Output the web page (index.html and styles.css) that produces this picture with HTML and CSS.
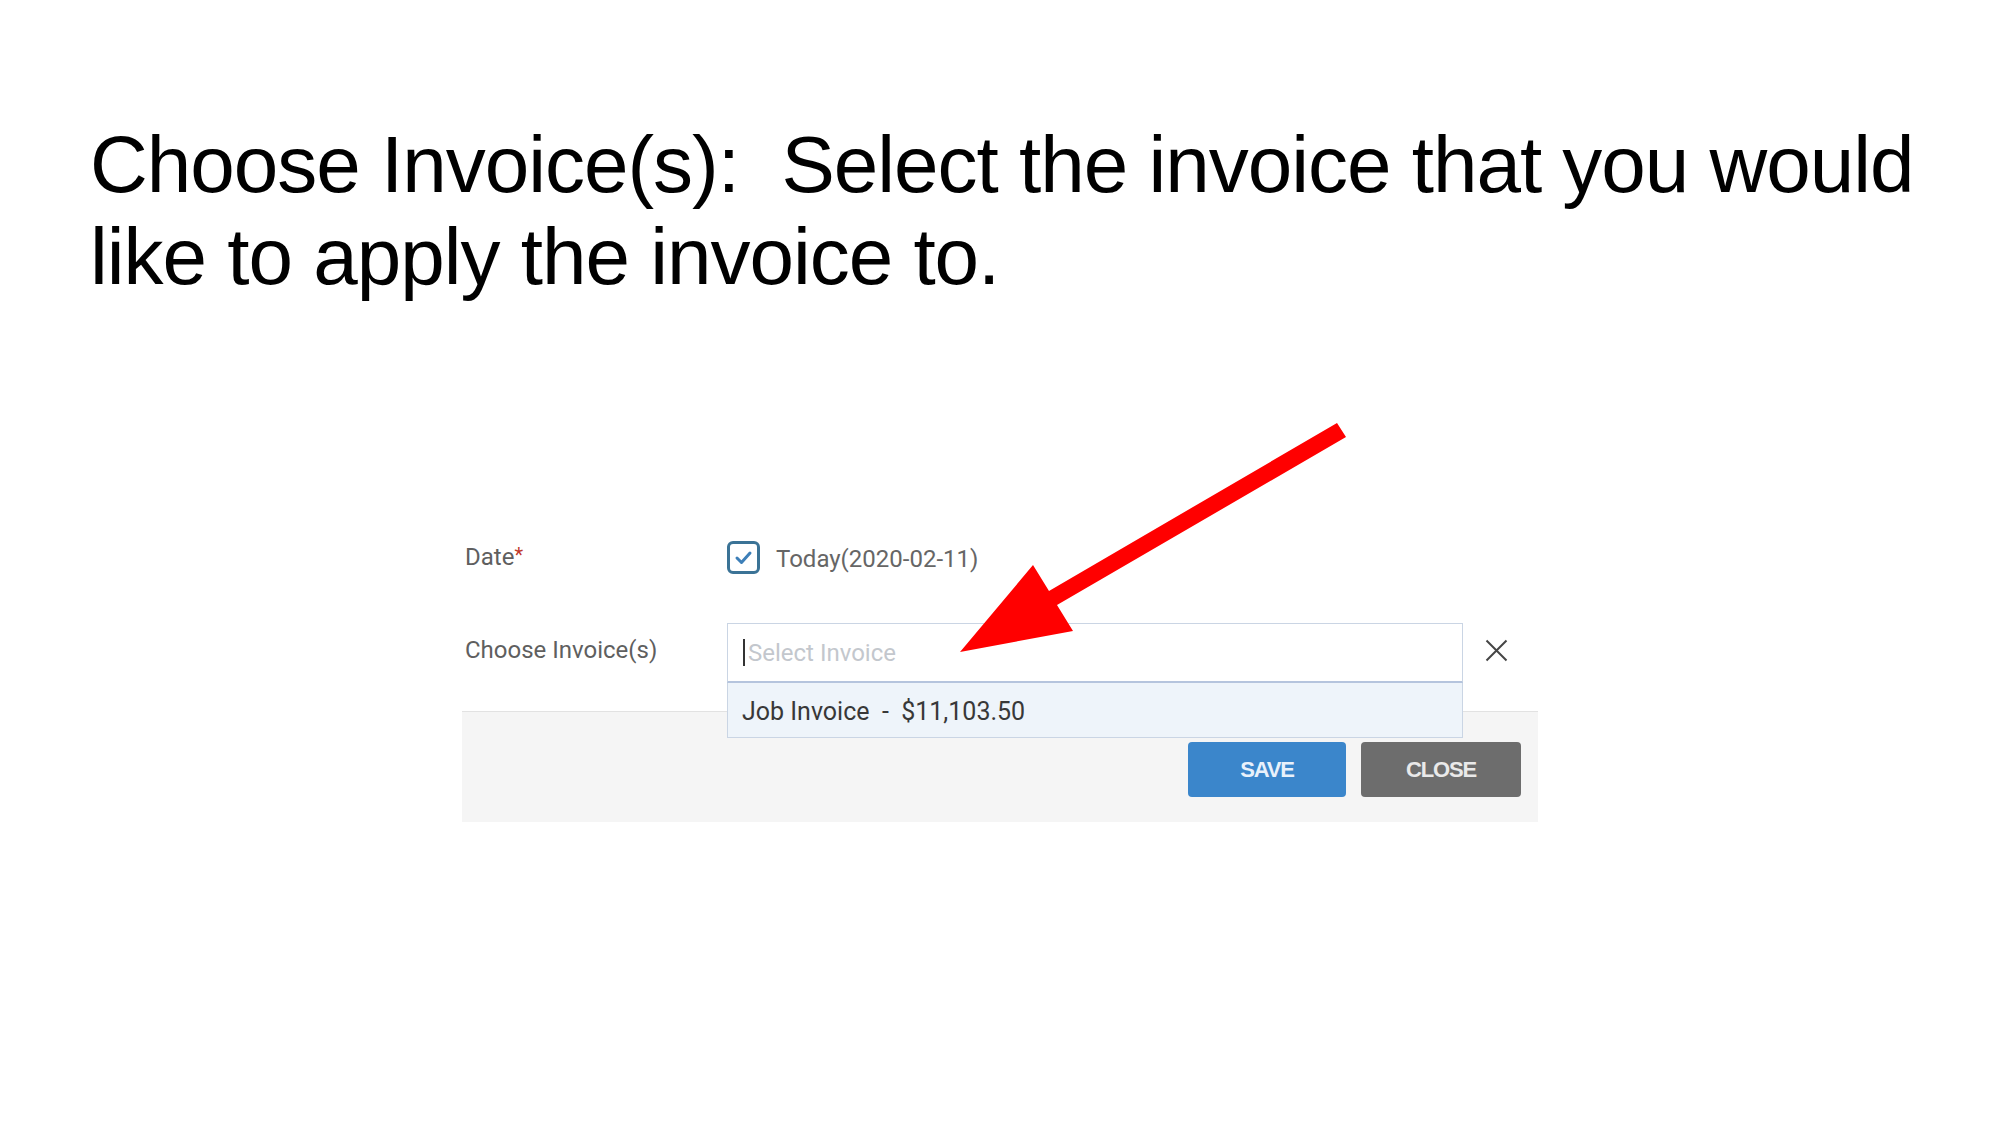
FILE: index.html
```html
<!DOCTYPE html>
<html lang="en">
<head>
<meta charset="utf-8">
<title>Choose Invoice(s)</title>
<link rel="stylesheet" href="styles.css">
</head>
<body>
<div class="slide">
  <h1 class="title">Choose Invoice(s):&nbsp; Select the invoice that you would like to apply the invoice to.</h1>

  <div class="dialog">
    <div class="dialog-body">
      <div class="row row-date">
        <div class="label label-date">Date<span class="req">*</span></div>
        <div class="check-field">
          <span class="checkbox">
            <svg width="27" height="27" viewBox="0 0 27 27"><path d="M7 14 L11.5 18.5 L20 9" fill="none" stroke="#3d7fb8" stroke-width="3" stroke-linecap="round" stroke-linejoin="round"/></svg>
          </span>
          <span class="today">Today(2020-02-11)</span>
        </div>
      </div>
      <div class="row row-invoice">
        <div class="label label-invoice">Choose Invoice(s)</div>
        <div class="select-wrap">
          <div class="select-input"><span class="caret"></span><span class="placeholder">Select Invoice</span></div>
          <div class="dropdown"><span class="option">Job Invoice  -  $11,103.50</span></div>
        </div>
        <svg class="clear-x" width="23" height="23" viewBox="0 0 23 23"><path d="M1.5 1.5 L21.5 21.5 M21.5 1.5 L1.5 21.5" stroke="#454545" stroke-width="2" fill="none"/></svg>
      </div>
    </div>
    <div class="dialog-footer">
      <button class="btn btn-save">SAVE</button>
      <button class="btn btn-close">CLOSE</button>
    </div>
  </div>

  <svg class="arrow" width="2000" height="1125" viewBox="0 0 2000 1125">
    <polygon points="1337,423 1346,437 1057,605 1073,631 960,652 1033,565 1049,591" fill="#ff0000"/>
  </svg>
</div>
</body>
</html>
```
FILE: styles.css
```css
html, body {
  margin: 0;
  padding: 0;
  background: #ffffff;
}

.slide {
  position: relative;
  width: 2000px;
  height: 1125px;
  overflow: hidden;
  padding-top: 119px;
  box-sizing: border-box;
}

.title {
  margin: 0 0 0 90px;
  width: 1860px;
  font-family: "Liberation Sans", Arial, sans-serif;
  font-weight: normal;
  font-size: 80px;
  line-height: 92px;
  letter-spacing: -1px;
  color: #000000;
}

.dialog {
  margin: 198px 0 0 462px;
  width: 1076px;
  font-family: Roboto, "Liberation Sans", sans-serif;
}

.dialog-body {
  background: #ffffff;
  padding: 40px 0 28px 3px;
}

.row {
  display: flex;
  align-items: flex-start;
}

.row-date {
  height: 33px;
}

.row-invoice {
  margin-top: 49px;
}

.label {
  width: 262px;
  font-size: 24px;
  color: #5f5f5f;
}

.label-date {
  line-height: 33px;
}

.label-invoice {
  line-height: 54px;
}

.req {
  color: #c0392b;
  font-size: 20px;
  vertical-align: top;
  line-height: 28px;
}

.check-field {
  display: flex;
  align-items: center;
  height: 33px;
}

.checkbox {
  width: 33px;
  height: 33px;
  box-sizing: border-box;
  border: 3px solid #3b7396;
  border-radius: 6px;
  background: #ffffff;
  display: flex;
  align-items: center;
  justify-content: center;
}

.today {
  margin-left: 16px;
  padding-top: 3px;
  font-size: 24px;
  line-height: 30px;
  color: #666666;
}

.select-wrap {
  position: relative;
  width: 736px;
}

.select-input {
  height: 60px;
  box-sizing: border-box;
  border: 1px solid #cad5e4;
  border-bottom: 2px solid #b5c4dd;
  background: #ffffff;
  padding-left: 15px;
  display: flex;
  align-items: center;
}

.caret {
  width: 2px;
  height: 27px;
  background: #333333;
}

.placeholder {
  margin-left: 3px;
  font-size: 24px;
  color: #c3c7cd;
}

.dropdown {
  position: absolute;
  top: 100%;
  left: 0;
  width: 736px;
  height: 55px;
  box-sizing: border-box;
  border: 1px solid #cad5e4;
  border-top: none;
  background: #eef4fa;
  padding: 4px 0 0 14px;
  z-index: 2;
}

.option {
  display: block;
  white-space: pre;
  font-size: 25px;
  line-height: 50px;
  color: #383838;
}

.clear-x {
  margin: 16px 0 0 22px;
}

.dialog-footer {
  height: 111px;
  box-sizing: border-box;
  border-top: 1px solid #e2e2e2;
  background: #f5f5f5;
  display: flex;
  justify-content: flex-end;
  align-items: flex-start;
  gap: 15px;
  padding: 30px 17px 0 0;
}

.btn {
  height: 55px;
  border: none;
  border-radius: 4px;
  font-family: "Liberation Sans", Arial, sans-serif;
  font-weight: bold;
  font-size: 22px;
  letter-spacing: -1.2px;
  padding: 0;
}

.btn-save {
  width: 158px;
  background: #3b86cb;
  color: #e8f1fb;
}

.btn-close {
  width: 160px;
  background: #6d6d6d;
  color: #e9e9e9;
}

.arrow {
  position: absolute;
  top: 0;
  left: 0;
  pointer-events: none;
  z-index: 5;
}
```
